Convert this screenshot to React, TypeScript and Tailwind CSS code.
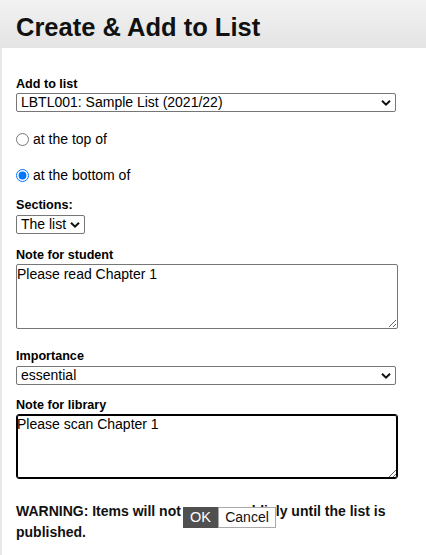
import React, { useState } from 'react';

const Chevron = () => (
  <svg width="10" height="7" viewBox="0 0 10 7" className="pointer-events-none absolute right-[5px] top-1/2 -translate-y-1/2">
    <path d="M1 1.2 L5 5.2 L9 1.2" fill="none" stroke="#111" strokeWidth="2" />
  </svg>
);

const Select: React.FC<{ value: string; options: string[]; className: string }> = ({ value, options, className }) => (
  <div className={`relative ${className}`}>
    <select
      defaultValue={value}
      className="block h-[19px] w-full appearance-none rounded-[2px] border border-[#767676] bg-white pl-[4px] pr-[12px] text-[14px] leading-[17px] text-black"
    >
      {options.map(o => (
        <option key={o}>{o}</option>
      ))}
    </select>
    <Chevron />
  </div>
);

const Label: React.FC<{ children: React.ReactNode; className: string }> = ({ children, className }) => (
  <div className={`text-[12.6px] font-bold leading-[16px] text-black ${className}`}>{children}</div>
);

const App: React.FC = () => {
  const [position, setPosition] = useState('bottom');

  return (
    <div className="min-h-[555px] bg-white font-['Liberation_Sans',Arial,sans-serif] text-black">
      {/* Header */}
      <div className="h-[48px] bg-gradient-to-b from-[#f2f2f2] to-[#e4e4e4] pl-4 pt-[12px]">
        <h1 className="text-[25.5px] font-bold leading-[30px] text-[#111]">Create &amp; Add to List</h1>
      </div>

      {/* Form */}
      <div className="border-l-2 border-[#e8e8e8] pb-6 pl-[14px] pt-[28px]">
        <Label className="">Add to list</Label>
        <Select className="mt-px w-[380px]" value="LBTL001: Sample List (2021/22)" options={['LBTL001: Sample List (2021/22)']} />

        <label className="mt-[17px] flex h-[20px] items-center text-[14px] leading-[20px]">
          <input
            type="radio"
            name="pos"
            checked={position === 'top'}
            onChange={() => setPosition('top')}
            className="m-0 h-[13px] w-[13px] accent-[#0075ff]"
          />
          <span className="ml-[4px]">at the top of</span>
        </label>
        <label className="mt-[16px] flex h-[20px] items-center text-[14px] leading-[20px]">
          <input
            type="radio"
            name="pos"
            checked={position === 'bottom'}
            onChange={() => setPosition('bottom')}
            className="m-0 h-[13px] w-[13px] accent-[#0075ff]"
          />
          <span className="ml-[4px]">at the bottom of</span>
        </label>

        <Label className="mt-[12px]">Sections:</Label>
        <Select className="mt-[2px] w-[69px]" value="The list" options={['The list']} />

        <Label className="mt-[13px]">Note for student</Label>
        <textarea
          defaultValue="Please read Chapter 1"
          className="mt-px block h-[65px] w-[382px] rounded-[2px] border border-[#767676] bg-white px-0 pt-px text-[14px] leading-[16px] text-black"
        />

        <Label className="mt-[19px]">Importance</Label>
        <Select className="mt-[2px] w-[380px]" value="essential" options={['essential', 'recommended', 'further reading']} />

        <Label className="mt-[12px]">Note for library</Label>
        <textarea
          defaultValue="Please scan Chapter 1"
          className="mt-px block h-[65px] w-[382px] rounded-[3px] border border-black bg-white px-0 pt-px text-[14px] leading-[16px] text-black shadow-[inset_0_0_0_1px_#000] outline-none"
        />

        <div className="relative mt-[22px] w-[390px]">
          <p className="text-[14px] font-bold leading-[21px] text-[#111]">
            WARNING: Items will not appear publicly until the list is published.
          </p>
          <div className="absolute left-[167px] top-[6px] flex h-[21px]">
            <button className="h-[21px] w-[35px] bg-[#505050] text-[14.5px] leading-[21px] text-white">OK</button>
            <button className="h-[21px] w-[58px] border border-[#a9a9a9] bg-white text-[14px] leading-[19px] text-[#111]">
              Cancel
            </button>
          </div>
        </div>
      </div>
    </div>
  );
};

export default App;
